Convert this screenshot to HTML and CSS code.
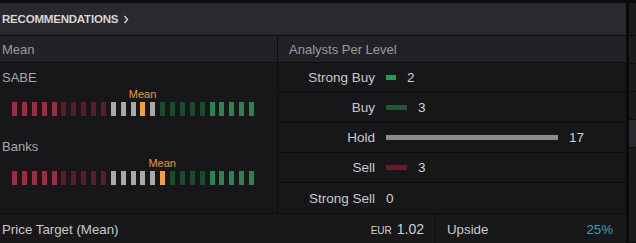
FILE: index.html
```html
<!DOCTYPE html>
<html lang="en">
  <head>
    <meta charset="UTF-8" />
    <title>Recommendations</title>
    <link rel="stylesheet" href="styles.css">
  </head>
  <body>
    <div class="layout">
      <div class="panel">
        <div class="panel-head">
          <span class="title">RECOMMENDATIONS</span>
          <svg class="chev" width="6" height="9" viewBox="0 0 6 9">
            <path d="M1.5 1 L4.5 4.5 L1.5 8" fill="none" stroke="#cfcfd2" stroke-width="1.4" />
          </svg>
        </div>

        <div class="cols">
          <div class="col-head">Mean</div>
          <div class="col-head">Analysts Per Level</div>

          <div class="means">
            <div class="rating">
              <div class="rating-name">SABE</div>
              <div class="meter">
                <span class="mean-tag" style="left: 130.5px">Mean</span>
                <span class="seg r1"></span><span class="seg r1"></span><span class="seg r1"></span><span class="seg r1"></span><span class="seg r1"></span>
                <span class="seg r2"></span><span class="seg r2"></span><span class="seg r2"></span><span class="seg r2"></span><span class="seg r2"></span>
                <span class="seg n"></span><span class="seg n"></span><span class="seg n"></span><span class="seg mean"></span><span class="seg n"></span>
                <span class="seg g2"></span><span class="seg g2"></span><span class="seg g2"></span><span class="seg g2"></span><span class="seg g2"></span>
                <span class="seg g1"></span><span class="seg g1"></span><span class="seg g1"></span><span class="seg g1"></span><span class="seg g1"></span>
              </div>
            </div>

            <div class="rating">
              <div class="rating-name">Banks</div>
              <div class="meter">
                <span class="mean-tag" style="left: 150.2px">Mean</span>
                <span class="seg r1"></span><span class="seg r1"></span><span class="seg r1"></span><span class="seg r1"></span><span class="seg r1"></span>
                <span class="seg r2"></span><span class="seg r2"></span><span class="seg r2"></span><span class="seg r2"></span><span class="seg r2"></span>
                <span class="seg n"></span><span class="seg n"></span><span class="seg n"></span><span class="seg n"></span><span class="seg n"></span>
                <span class="seg mean"></span><span class="seg g2"></span><span class="seg g2"></span><span class="seg g2"></span><span class="seg g2"></span>
                <span class="seg g1"></span><span class="seg g1"></span><span class="seg g1"></span><span class="seg g1"></span><span class="seg g1"></span>
              </div>
            </div>
          </div>

          <div class="levels">
            <div class="lvl">
              <span class="lvl-name">Strong Buy</span>
              <span class="lvl-bar strong-buy" style="width: 10px"></span>
              <span class="lvl-count">2</span>
            </div>
            <div class="lvl">
              <span class="lvl-name">Buy</span>
              <span class="lvl-bar buy" style="width: 21px"></span>
              <span class="lvl-count">3</span>
            </div>
            <div class="lvl">
              <span class="lvl-name">Hold</span>
              <span class="lvl-bar hold" style="width: 172px"></span>
              <span class="lvl-count">17</span>
            </div>
            <div class="lvl">
              <span class="lvl-name">Sell</span>
              <span class="lvl-bar sell" style="width: 21px"></span>
              <span class="lvl-count">3</span>
            </div>
            <div class="lvl">
              <span class="lvl-name">Strong Sell</span>
              <span class="lvl-count">0</span>
            </div>
          </div>
        </div>

        <div class="foot">
          <div class="foot-cell">
            <span>Price Target (Mean)</span>
            <span class="price"><span class="ccy">EUR</span>1.02</span>
          </div>
          <div class="foot-cell">
            <span>Upside</span>
            <span class="upside">25%</span>
          </div>
        </div>
      </div>

      <div class="side">
        <div class="side-row tall"></div>
        <div class="side-row"></div>
        <div class="side-row"></div>
        <div class="side-row"></div>
        <div class="side-row lit"></div>
        <div class="side-row"></div>
      </div>
    </div>
  </body>
</html>
```

FILE: styles.css
```css
* {
  box-sizing: border-box;
  font-family: "Liberation Sans", Arial, sans-serif;
}

body {
  margin: 0;
  padding: 0;
  background-color: #0b0b0c;
  width: 636px;
  height: 243px;
  overflow: hidden;
}

.layout {
  display: flex;
  height: 243px;
}

.panel {
  width: 626px;
  padding-top: 3px;
  display: flex;
  flex-direction: column;
}

.panel-head {
  height: 33px;
  background: #2a2a2e;
  border-bottom: 1px solid #0e0e10;
  display: flex;
  align-items: center;
  padding-left: 2px;
  gap: 5px;
}

.title {
  font-size: 11.5px;
  font-weight: bold;
  color: #d6d6d8;
  letter-spacing: -0.2px;
}

.chev {
  margin-top: 1px;
}

.cols {
  display: grid;
  grid-template-columns: 277px 1fr;
  column-gap: 1px;
  background: #0e0e10;
}

.col-head {
  height: 27px;
  background: #222226;
  border-bottom: 1px solid #0e0e10;
  color: #9a9a9e;
  font-size: 13px;
  display: flex;
  align-items: center;
  padding-left: 2px;
}

.col-head + .col-head {
  padding-left: 11px;
}

.means {
  background: #17171a;
  padding: 8px 0 0 2px;
}

.rating + .rating {
  margin-top: 24px;
}

.rating-name {
  font-size: 13px;
  line-height: 14px;
  color: #a8a8ac;
}

.meter {
  position: relative;
  margin: 17px 0 0 10px;
  width: 242px;
  height: 14px;
  display: flex;
  justify-content: space-between;
}

.seg {
  width: 5px;
  height: 14px;
}

.r1 { background: #9a2d43; }
.r2 { background: #5a1c29; }
.n { background: #a9a9ab; }
.g2 { background: #1c4a31; }
.g1 { background: #2c8350; }
.mean { background: #f0a040; }

.mean-tag {
  position: absolute;
  bottom: calc(100% + 2px);
  transform: translateX(-50%);
  font-size: 11px;
  line-height: 12px;
  color: #e69a3e;
}

.levels {
  background: #17171a;
}

.lvl {
  height: 30px;
  border-bottom: 1px solid #0e0e10;
  display: flex;
  align-items: center;
  font-size: 13.5px;
  color: #c9c9cc;
}

.lvl:last-child {
  border-bottom: none;
}

.lvl-name {
  width: 97px;
  text-align: right;
}

.lvl-bar {
  margin-left: 11px;
  height: 5px;
}

.lvl-count {
  margin-left: 11px;
  color: #d2d2d4;
}

.strong-buy { background: #2e9558; }
.buy { background: #1f5737; }
.hold { background: #8c8c8f; }
.sell { background: #661d2a; }

.foot {
  display: grid;
  grid-template-columns: 435px 1fr;
  column-gap: 1px;
  background: #0e0e10;
  border-top: 1px solid #0e0e10;
  flex: 1;
}

.foot-cell {
  background: #18181b;
  display: flex;
  align-items: center;
  justify-content: space-between;
  padding: 1px 11px 0 2px;
  font-size: 13.3px;
  color: #c9c9cc;
}

.foot-cell + .foot-cell {
  padding: 1px 13px 0 11px;
}

.price {
  font-size: 14px;
  color: #d2d2d4;
}

.ccy {
  font-size: 10px;
  margin-right: 5px;
}

.upside {
  color: #3f9fb0;
}

.side {
  margin-left: 3px;
  flex: 1;
  padding-top: 3px;
  display: flex;
  flex-direction: column;
}

.side-row {
  height: 28px;
  background: #1b1b1e;
  border-bottom: 1px solid #0e0e10;
}

.side-row.tall {
  height: 33px;
}

.side-row.lit {
  background: #2a2a2e;
}

.side-row:last-child {
  flex: 1;
}
```
